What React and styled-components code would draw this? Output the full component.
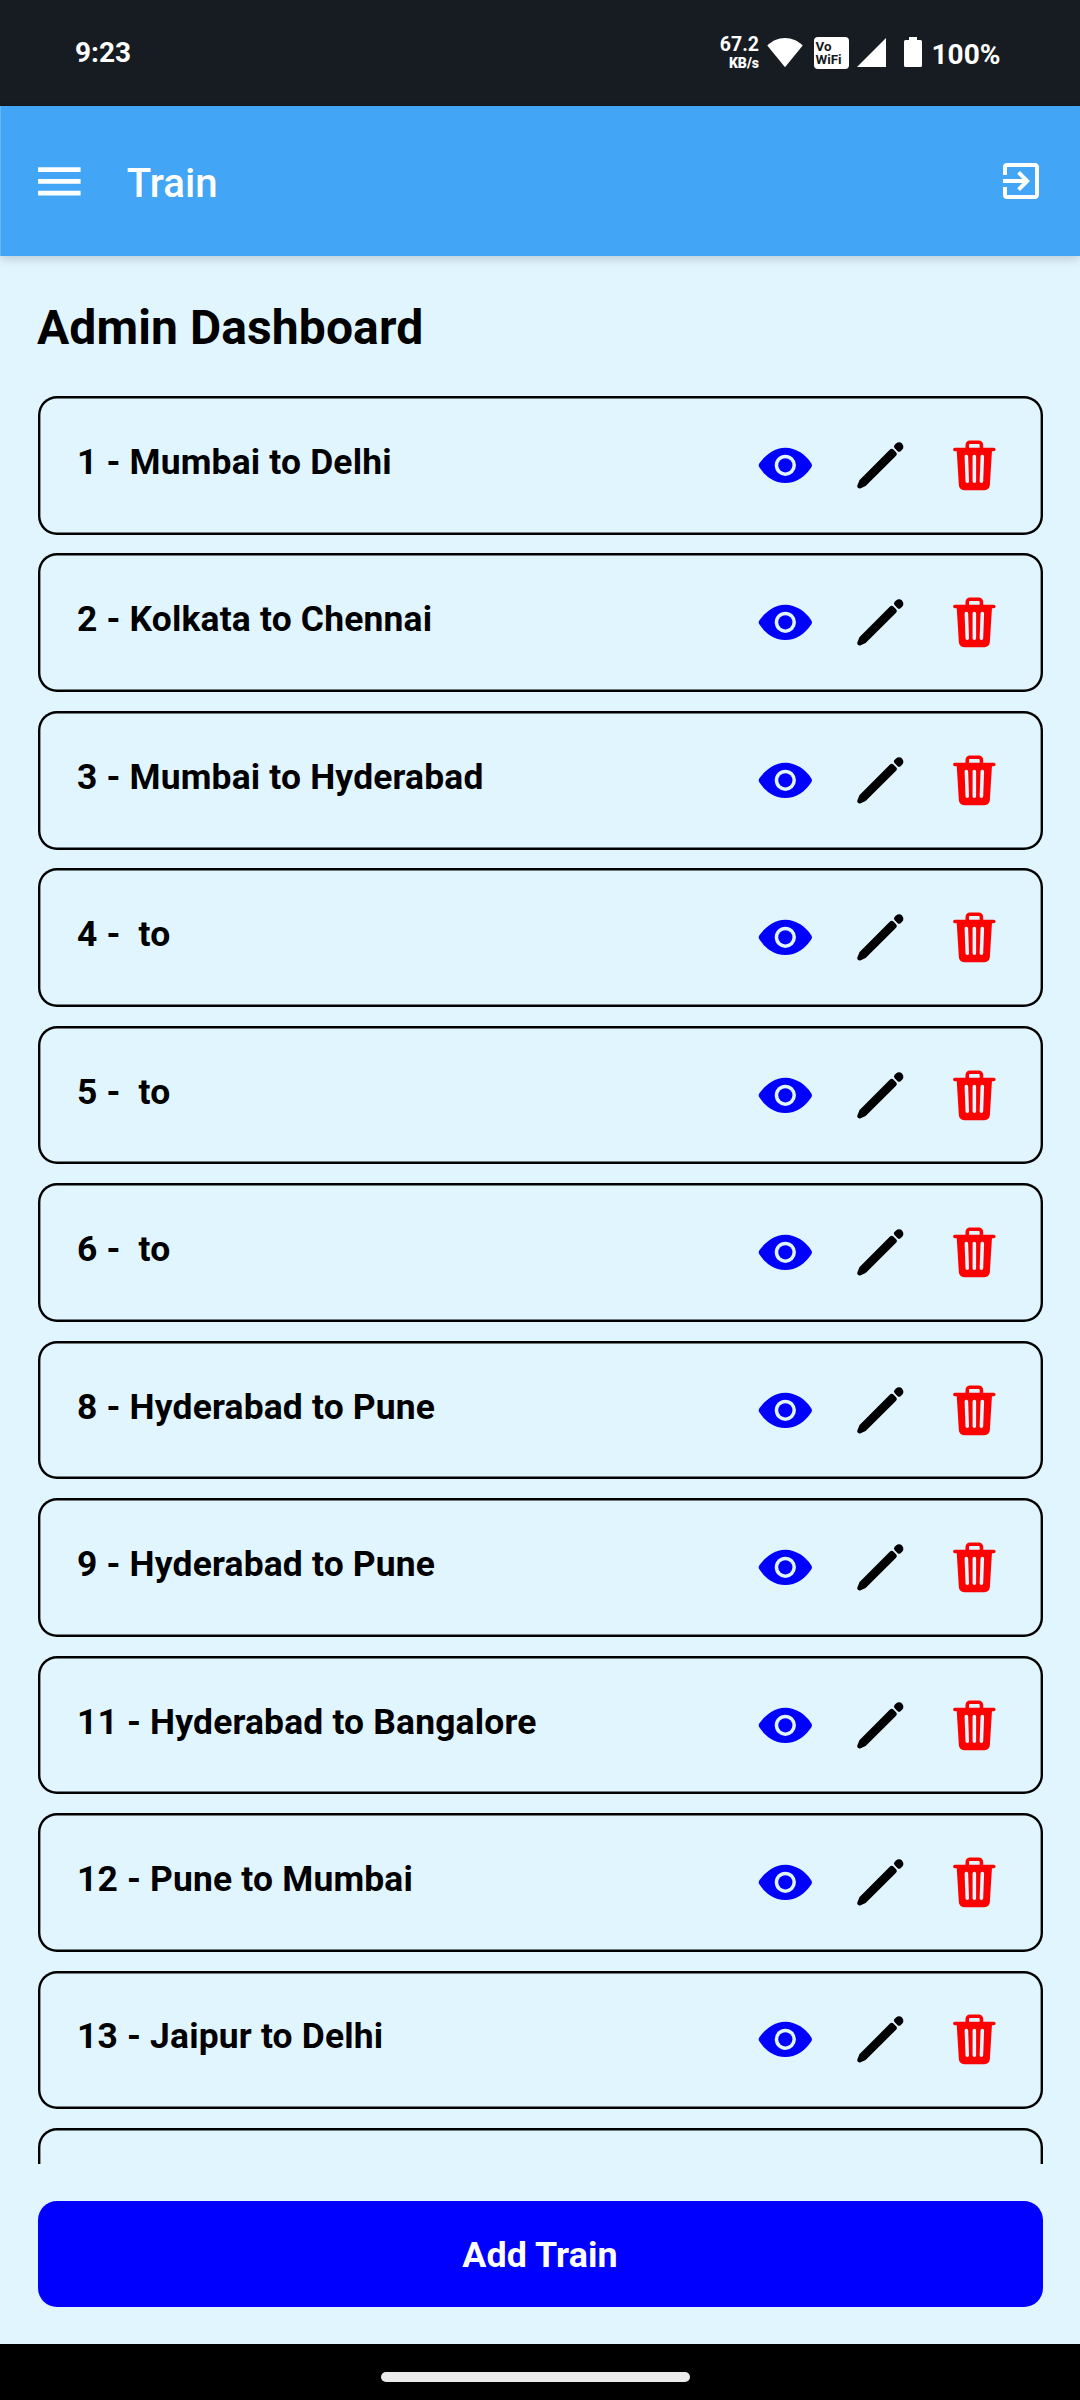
import React from "react";
import styled, { createGlobalStyle } from "styled-components";
import { MdMenu, MdExitToApp } from "react-icons/md";
import { IoEye, IoPencil, IoTrash } from "react-icons/io5";

const GlobalStyle = createGlobalStyle`
  * { box-sizing: border-box; }
  body { margin: 0; background: #e1f5fe; font-family: Roboto, "Liberation Sans", sans-serif; }
  svg { display: block; flex: none; }
`;

const Screen = styled.div`
  display: flex;
  flex-direction: column;
  width: 1080px;
  height: 2400px;
  overflow: hidden;
  background: #e1f5fe;
  color: #000;
`;

const StatusBar = styled.div`
  flex: none;
  display: flex;
  align-items: flex-start;
  height: 106px;
  padding: 0 80px 0 75px;
  background: #171b22;
  color: #fff;
`;

const Clock = styled.span`
  margin-top: 36px;
  font-size: 28px;
  line-height: 33px;
  font-weight: 700;
`;

const StatusIcons = styled.div`
  margin-left: auto;
  margin-top: 37px;
  display: flex;
  align-items: flex-start;
`;

const NetSpeed = styled.div`
  display: flex;
  flex-direction: column;
  align-items: flex-end;
  width: 60px;
  margin-right: 8px;
  font-weight: 700;
`;

const SpeedValue = styled.span`
  font-size: 19.5px;
  line-height: 16px;
`;

const SpeedUnit = styled.span`
  margin-top: 2px;
  font-size: 14px;
  line-height: 16px;
  font-weight: 900;
`;

const WifiBadge = styled.div`
  display: flex;
  flex-direction: column;
  width: 35px;
  height: 32px;
  margin: 0 8px 0 11px;
  padding: 3px 0 0 1.5px;
  border-radius: 4px;
  background: #fff;
  color: #171b22;
  font-size: 13.4px;
  line-height: 13px;
  font-weight: 700;
`;

const SignalIcon = styled.svg`
  margin-top: 1px;
  margin-right: 18px;
`;

const BatteryLevel = styled.span`
  margin-top: 1px;
  margin-left: 9.5px;
  width: 68.5px;
  font-size: 28px;
  line-height: 33px;
  font-weight: 700;
  white-space: nowrap;
`;

const AppBar = styled.header`
  flex: none;
  display: flex;
  align-items: center;
  height: 150px;
  padding: 0 35px 0 29.6px;
  border-left: 1px solid #67b7f7;
  background: #42a5f5;
  color: #fff;
  box-shadow: 0 2px 10px rgba(0, 0, 0, 0.2);
`;

const AppTitle = styled.h1`
  flex: 1;
  margin: 5px 0 0 39.4px;
  font-size: 40.2px;
  line-height: 50px;
  font-weight: 500;
`;

const Content = styled.main`
  flex: none;
  display: flex;
  flex-direction: column;
  height: 2088px;
  padding: 37px 37px 37px 38px;
`;

const Heading = styled.h2`
  margin: 7px 0 0 -1px;
  height: 96px;
  font-size: 48px;
  line-height: 56px;
  font-weight: 700;
  letter-spacing: 0.1px;
`;

const TrainList = styled.div`
  height: 1768px;
  overflow: hidden;
`;

const TrainCard = styled.div`
  display: flex;
  align-items: flex-start;
  justify-content: space-between;
  height: 138.6px;
  margin-bottom: 18.87px;
  padding: 40.9px 40.4px 0 39px;
  border-radius: 19px;
  box-shadow: inset 0 0 0 2.4px #000;
`;

const TrainName = styled.span`
  margin-top: 4px;
  font-size: 35.44px;
  line-height: 42px;
  font-weight: 700;
  letter-spacing: 0.17px;
  white-space: pre;
`;

const Actions = styled.div`
  display: flex;
`;

const ActionIcon = styled.span`
  display: flex;
  margin-left: ${(p) => p.$gap}px;
`;

const AddButton = styled.button`
  height: 106px;
  margin: 37px 0 0;
  padding: 2px 1px 0 0;
  border: 0;
  border-radius: 19px;
  background: #0000ff;
  color: #fff;
  font: 700 35.8px/104px Roboto, "Liberation Sans", sans-serif;
  letter-spacing: 0.1px;
`;

const NavigationBar = styled.div`
  flex: 1;
  padding: 28px 0 0 381px;
  background: #000;
`;

const HomePill = styled.div`
  width: 309px;
  height: 10px;
  border-radius: 5px;
  background: #ebebeb;
`;

const trains = [
  { id: 1, from: "Mumbai", to: "Delhi" },
  { id: 2, from: "Kolkata", to: "Chennai" },
  { id: 3, from: "Mumbai", to: "Hyderabad" },
  { id: 4, from: "", to: "" },
  { id: 5, from: "", to: "" },
  { id: 6, from: "", to: "" },
  { id: 8, from: "Hyderabad", to: "Pune" },
  { id: 9, from: "Hyderabad", to: "Pune" },
  { id: 11, from: "Hyderabad", to: "Bangalore" },
  { id: 12, from: "Pune", to: "Mumbai" },
  { id: 13, from: "Jaipur", to: "Delhi" },
];

function TrainRow({ train }) {
  return (
    <TrainCard>
      <TrainName>{`${train.id} - ${train.from} to ${train.to}`}</TrainName>
      <Actions>
        <ActionIcon $gap={0}>
          <IoEye size={56.7} color="#0000ff" />
        </ActionIcon>
        <ActionIcon $gap={38.6}>
          <IoPencil size={56.7} color="#000" />
        </ActionIcon>
        <ActionIcon $gap={37}>
          <IoTrash size={56.7} color="#ff0000" />
        </ActionIcon>
      </Actions>
    </TrainCard>
  );
}

export default function App() {
  return (
    <Screen>
      <GlobalStyle />
      <StatusBar>
        <Clock>9:23</Clock>
        <StatusIcons>
          <NetSpeed>
            <SpeedValue>67.2</SpeedValue>
            <SpeedUnit>KB/s</SpeedUnit>
          </NetSpeed>
          <svg width="36" height="31" viewBox="0 0 36 31" fill="#fff">
            <path d="M18 30.3 0.3 8.4C5 4 11 1 18 1s13 3 17.7 7.4Z" />
          </svg>
          <WifiBadge>
            <span>Vo</span>
            <span>WiFi</span>
          </WifiBadge>
          <SignalIcon width="29" height="29" viewBox="0 0 29 29" fill="#fff">
            <path d="M29 0v29H0Z" />
          </SignalIcon>
          <svg width="18" height="30" viewBox="0 0 18 30" fill="#fff">
            <path d="M5 0h8v3h3.500q1.500 0 1.500 1.500v24q0 1.500-1.500 1.500h-15Q0 30 0 28.500v-24Q0 3 1.500 3H5Z" />
          </svg>
          <BatteryLevel>100%</BatteryLevel>
        </StatusIcons>
      </StatusBar>
      <AppBar>
        <MdMenu size={56.7} />
        <AppTitle>Train</AppTitle>
        <MdExitToApp size={48} />
      </AppBar>
      <Content>
        <Heading>Admin Dashboard</Heading>
        <TrainList>
          {trains.map((train) => (
            <TrainRow key={train.id} train={train} />
          ))}
          <TrainCard />
        </TrainList>
        <AddButton>Add Train</AddButton>
      </Content>
      <NavigationBar>
        <HomePill />
      </NavigationBar>
    </Screen>
  );
}
